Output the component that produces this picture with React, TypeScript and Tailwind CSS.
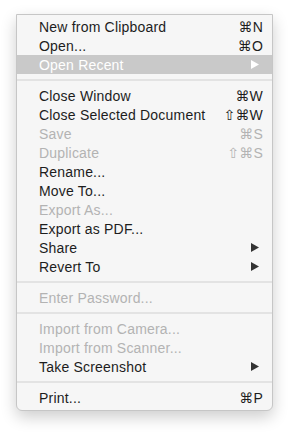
import React from 'react';

type Item =
  | { sep: true }
  | { label: string; shortcut?: string; submenu?: boolean; disabled?: boolean; active?: boolean };

const items: Item[] = [
  { label: "New from Clipboard", shortcut: "⌘N" },
  { label: "Open...", shortcut: "⌘O" },
  { label: "Open Recent", submenu: true, active: true },
  { sep: true },
  { label: "Close Window", shortcut: "⌘W" },
  { label: "Close Selected Document", shortcut: "⇧⌘W" },
  { label: "Save", shortcut: "⌘S", disabled: true },
  { label: "Duplicate", shortcut: "⇧⌘S", disabled: true },
  { label: "Rename..." },
  { label: "Move To..." },
  { label: "Export As...", disabled: true },
  { label: "Export as PDF..." },
  { label: "Share", submenu: true },
  { label: "Revert To", submenu: true },
  { sep: true },
  { label: "Enter Password...", disabled: true },
  { sep: true },
  { label: "Import from Camera...", disabled: true },
  { label: "Import from Scanner...", disabled: true },
  { label: "Take Screenshot", submenu: true },
  { sep: true },
  { label: "Print...", shortcut: "⌘P" },
];

const Arrow = ({ color }: { color: string }) => (
  <svg width="8" height="9" viewBox="0 0 8 9" className="mr-[4px]">
    <path d="M0 0 L8 4.5 L0 9 Z" fill={color} />
  </svg>
);

const App: React.FC = () => {
  return (
    <div className="min-h-[432px] w-[289px] bg-white pl-[16px] pt-[14px]">
      <div
        className="w-[257px] rounded-b-[6px] border border-[#c6c6c6] bg-[#f6f6f6] pb-[3px] pt-[2px] shadow-[0_6px_16px_rgba(0,0,0,0.2)]"
        style={{ fontFamily: '"Liberation Sans", "DejaVu Sans", sans-serif' }}
      >
        {items.map((item, i) => {
          if ("sep" in item) {
            return (
              <div key={i} className="flex h-[12px] items-center">
                <div className="h-[2px] w-full bg-[#e3e3e3]" />
              </div>
            );
          }
          const color = item.active
            ? "text-white"
            : item.disabled
            ? "text-[#b3b3b3]"
            : "text-[#1d1d1d]";
          return (
            <div
              key={i}
              className={`flex h-[19px] items-center justify-between pl-[22px] pr-[9px] text-[14px] tracking-[0.2px] ${color} ${
                item.active ? "bg-[#c9c9c9]" : ""
              }`}
            >
              <span className="leading-none">{item.label}</span>
              {item.shortcut && (
                <span
                  className="text-[14px] leading-none"
                  style={{ fontFamily: '"Liberation Sans", "DejaVu Sans", sans-serif' }}
                >
                  {item.shortcut}
                </span>
              )}
              {item.submenu && <Arrow color={item.active ? "#ffffff" : "#333333"} />}
            </div>
          );
        })}
      </div>
    </div>
  );
};

export default App;
